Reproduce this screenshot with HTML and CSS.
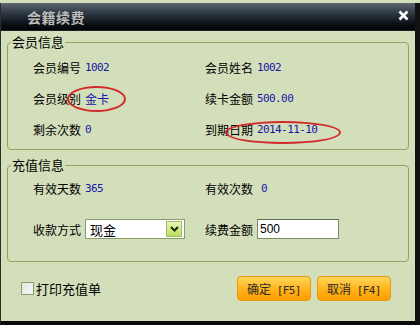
FILE: index.html
```html
<!DOCTYPE html>
<html lang="zh-CN">
<head>
  <meta charset="UTF-8" />
  <title>会籍续费</title>
  <link rel="stylesheet" href="styles.css">
</head>
<body>
  <div class="window">
    <div class="title-bar">
      <span class="title">会籍续费</span>
      <span class="close">
        <svg width="11" height="11" viewBox="0 0 11 11"><path d="M1.5 1.5 L9.5 9.5 M9.5 1.5 L1.5 9.5" stroke="#fff" stroke-width="2.6" /></svg>
      </span>
    </div>

    <fieldset class="group group-member">
      <legend>会员信息</legend>
      <div class="grid">
        <div class="field"><span class="label">会员编号</span><span class="value num">1002</span></div>
        <div class="field"><span class="label">会员姓名</span><span class="value num">1002</span></div>
        <div class="field"><span class="label">会员级别</span><span class="value">金卡</span></div>
        <div class="field"><span class="label">续卡金额</span><span class="value num">500.00</span></div>
        <div class="field"><span class="label">剩余次数</span><span class="value num">0</span></div>
        <div class="field"><span class="label">到期日期</span><span class="value num">2014-11-10</span></div>
      </div>
    </fieldset>

    <fieldset class="group group-pay">
      <legend>充值信息</legend>
      <div class="grid">
        <div class="field"><span class="label">有效天数</span><span class="value num">365</span></div>
        <div class="field"><span class="label">有效次数</span><span class="value num gap">0</span></div>
        <div class="field">
          <span class="label">收款方式</span>
          <div class="select">
            <span>现金</span>
            <span class="select-btn">
              <svg width="9" height="6" viewBox="0 0 9 6"><path d="M1 1 L4.5 4.5 L8 1" stroke="#1a2a08" stroke-width="2" fill="none" /></svg>
            </span>
          </div>
        </div>
        <div class="field">
          <span class="label">续费金额</span>
          <div class="input">500</div>
        </div>
      </div>
    </fieldset>

    <div class="footer">
      <label class="check"><span class="box"></span>打印充值单</label>
      <div class="buttons">
        <button class="btn">确定 <span class="key">[F5]</span></button>
        <button class="btn">取消 <span class="key">[F4]</span></button>
      </div>
    </div>

    <span class="mark mark-level"></span>
    <span class="mark mark-date"></span>
  </div>
</body>
</html>
```

FILE: styles.css
```css
body {
  margin: 0;
  background: #d3dfbb;
  font-family: "Noto Sans CJK SC", "Liberation Sans", sans-serif;
  font-size: 12px;
  color: #000;
}

.window {
  position: relative;
  margin-top: 3px;
  height: 318px;
  background: #d3dfbb;
  border-left: 1px solid #2a3028;
  border-right: 5px solid #121212;
  border-bottom: 4px solid #0a0a0a;
  display: flex;
  flex-direction: column;
}

.title-bar {
  height: 27px;
  display: flex;
  align-items: center;
  justify-content: space-between;
  padding: 0 6px 0 26px;
  background: linear-gradient(#5d6873, #323c46 35%, #0c1218 75%, #020405);
  border-bottom: 1px solid #1b2024;
}

.title {
  color: #bdbdbd;
  font-size: 14px;
  font-weight: bold;
  letter-spacing: 0.5px;
}

.close {
  display: flex;
  margin-top: -2px;
}

.group {
  margin: 4px 6px 0 6px;
  padding: 0;
  border: 1px solid #8fa55a;
  border-radius: 4px;
}

.group legend {
  padding: 0 1px;
  margin-left: 3px;
  font-size: 13px;
  line-height: 14px;
}

.group-member .grid {
  padding: 3px 0 4px 25px;
  grid-auto-rows: 31px;
}

.group-pay {
  margin-top: 8px;
}

.group-pay .grid {
  padding: 5px 0 21px 25px;
  grid-auto-rows: 22px;
  row-gap: 19px;
}

.grid {
  display: grid;
  grid-template-columns: 172px 1fr;
}

.field {
  display: flex;
  align-items: center;
}

.label {
  margin-right: 4px;
}

.value {
  color: #1616a6;
}

.num {
  font-family: "DejaVu Sans Mono", monospace;
  font-size: 11px;
  letter-spacing: -0.6px;
}

.gap {
  margin-left: 4px;
}

.select {
  width: 94px;
  height: 18px;
  background: #fff;
  border: 1px solid #8a9c6a;
  display: flex;
  align-items: center;
  justify-content: space-between;
  padding-left: 4px;
  font-size: 13px;
}

.select-btn {
  width: 14px;
  height: 14px;
  margin-right: 2px;
  display: flex;
  align-items: center;
  justify-content: center;
  border: 1px solid #a6bb6a;
  background: linear-gradient(#e8f5b8, #b8df5a);
}

.input {
  width: 78px;
  height: 18px;
  background: #fff;
  border: 1px solid #7c8c64;
  border-top-color: #5e6a4a;
  padding-left: 2px;
  display: flex;
  align-items: center;
  font-family: "Liberation Sans", sans-serif;
  font-size: 12px;
}

.footer {
  flex: 1;
  display: flex;
  align-items: center;
  justify-content: space-between;
  padding: 0 24px 7px 20px;
}

.check {
  display: flex;
  align-items: center;
  font-size: 13px;
}

.box {
  width: 11px;
  height: 11px;
  margin-right: 2px;
  border: 1px solid #8b9c6c;
  background: linear-gradient(135deg, #e4e4e0, #fafafa);
}

.buttons {
  display: flex;
  gap: 6px;
}

.btn {
  width: 74px;
  height: 25px;
  padding: 0;
  border: 1px solid #e59a10;
  border-radius: 4px;
  background: linear-gradient(#ffd65a, #ffb21a 55%, #ff9e00);
  color: #2a2a2a;
  font-family: "Noto Sans CJK SC", sans-serif;
  font-size: 12px;
}

.key {
  font-family: "DejaVu Sans Mono", monospace;
  font-size: 11px;
  letter-spacing: -0.6px;
  margin-left: 3px;
}

.mark {
  position: absolute;
  border: 2px solid #d22a2a;
  border-radius: 50%;
}

.mark-level {
  left: 66px;
  top: 83px;
  width: 55px;
  height: 22px;
}

.mark-date {
  left: 224px;
  top: 118px;
  width: 112px;
  height: 19px;
}
```
